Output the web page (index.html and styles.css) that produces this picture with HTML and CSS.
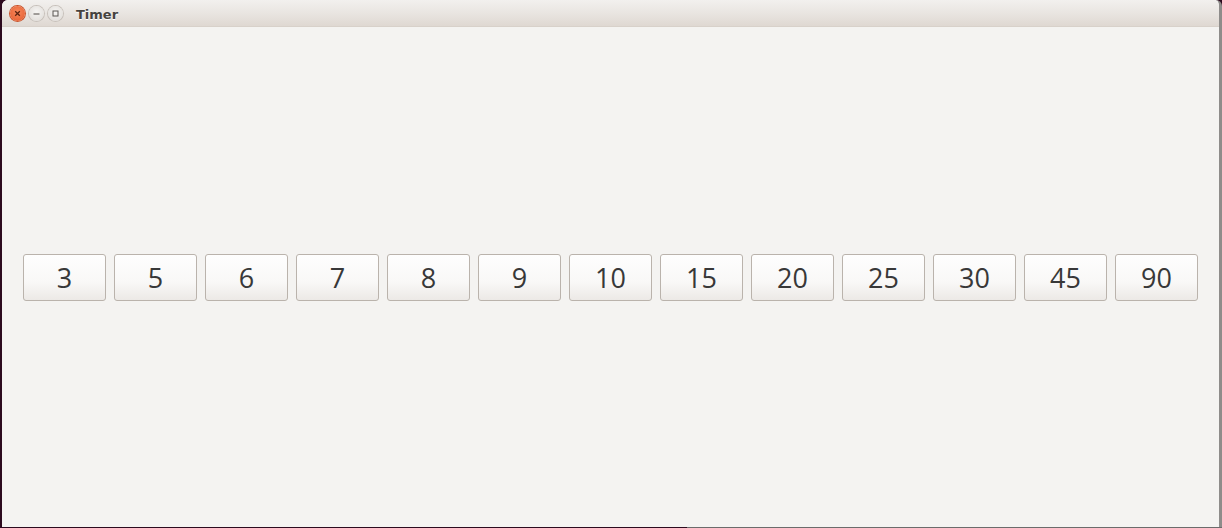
FILE: index.html
```html
<!DOCTYPE html>
<html>
<head>
<meta charset="utf-8">
<link rel="stylesheet" href="styles.css">
</head>
<body>
<div class="desktop">
  <div class="window">
    <div class="titlebar">
      <div class="controls">
        <span class="ctl close"><svg width="15" height="15" viewBox="0 0 15 15"><path d="M5.2 5.2 L9.8 9.8 M9.8 5.2 L5.2 9.8" stroke="#5a2210" stroke-width="1.3"/></svg></span>
        <span class="ctl"><svg width="15" height="15" viewBox="0 0 15 15"><path d="M4.5 8 H10.5" stroke="#5b5753" stroke-width="1.1"/></svg></span>
        <span class="ctl"><svg width="15" height="15" viewBox="0 0 15 15"><rect x="5" y="5" width="5" height="5" fill="none" stroke="#5b5753" stroke-width="1"/></svg></span>
      </div>
      <div class="title">Timer</div>
    </div>
    <div class="content">
      <div class="row">
        <button class="btn">3</button>
        <button class="btn">5</button>
        <button class="btn">6</button>
        <button class="btn">7</button>
        <button class="btn">8</button>
        <button class="btn">9</button>
        <button class="btn">10</button>
        <button class="btn">15</button>
        <button class="btn">20</button>
        <button class="btn">25</button>
        <button class="btn">30</button>
        <button class="btn">45</button>
        <button class="btn">90</button>
      </div>
    </div>
  </div>
  <div class="bottom"><span class="dark"></span><span class="gray"></span></div>
</div>
</body>
</html>
```

FILE: styles.css
```css
html, body {
  margin: 0;
  padding: 0;
  background: #2c0a1e;
  width: 1222px;
  height: 528px;
  overflow: hidden;
}
.desktop {
  display: flex;
  flex-direction: column;
  height: 528px;
}
.window {
  margin-left: 2px;
  width: 1217px;
  height: 527px;
  display: flex;
  flex-direction: column;
  background: #f4f3f1;
  border-right: 3px solid #8e8c8a;
  box-sizing: content-box;
  border-top-left-radius: 6px;
  border-top-right-radius: 6px;
}
.titlebar {
  height: 26px;
  border-bottom: 1px solid #d8d1ca;
  background: linear-gradient(#f2f0ee, #e9e5e1 50%, #dfd8d2);
  display: flex;
  align-items: center;
  border-top-left-radius: 6px;
  border-top-right-radius: 6px;
}
.controls {
  display: flex;
  gap: 4px;
  margin-left: 8px;
  margin-top: 1px;
}
.ctl {
  width: 15px;
  height: 15px;
  border-radius: 50%;
  background: radial-gradient(circle at 50% 40%, #f6f5f3, #dcd8d4);
  box-shadow: 0 0 0 1px #c7c1bb;
  display: flex;
}
.ctl.close {
  background: radial-gradient(circle at 50% 40%, #f6875b, #e45a2c);
  box-shadow: 0 0 0 1px #c9532b;
}
.title {
  margin-left: 13px;
  font-family: "DejaVu Sans", sans-serif;
  font-weight: bold;
  font-size: 13px;
  color: #46433f;
  text-shadow: 0 1px 0 #ffffff;
  margin-top: 3px;
}
.content {
  flex: 1;
  display: flex;
  align-items: center;
  justify-content: center;
}
.row {
  display: flex;
  gap: 8px;
}
.btn {
  width: 83px;
  height: 47px;
  padding: 0;
  margin: 0;
  border: 1px solid #bab3ac;
  border-radius: 3px;
  background: linear-gradient(#fefefe, #f9f8f7 60%, #ece9e6);
  font-family: "Open Sans", sans-serif;
  font-size: 27px;
  color: #383838;
  display: flex;
  align-items: center;
  justify-content: center;
  box-sizing: border-box;
}
.bottom {
  display: flex;
  height: 1px;
}
.bottom .dark {
  width: 687px;
  background: #2c0a1e;
}
.bottom .gray {
  flex: 1;
  background: #6b6b6b;
}
```
